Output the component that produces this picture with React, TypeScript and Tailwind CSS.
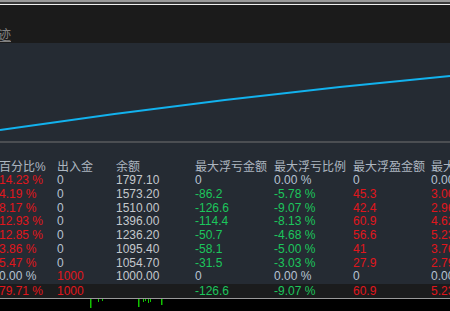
const RED = 'text-[#e0161c]';
const GREEN = 'text-[#1cc65c]';
const GRAY = 'text-[#b6c2d2]';
const LIGHT = 'text-[#c4c8cc]';

type Cell = [string, string];

const headers = ['百分比%', '出入金', '余额', '最大浮亏金额', '最大浮亏比例', '最大浮盈金额', '最大浮盈比例'];

const rows: Cell[][] = [
  [['14.23 %', RED], ['0', GRAY], ['1797.10', LIGHT], ['0', GRAY], ['0.00 %', GRAY], ['0', GRAY], ['0.00 %', GRAY]],
  [['4.19 %', RED], ['0', GRAY], ['1573.20', LIGHT], ['-86.2', GREEN], ['-5.78 %', GREEN], ['45.3', RED], ['3.00 %', RED]],
  [['8.17 %', RED], ['0', GRAY], ['1510.00', LIGHT], ['-126.6', GREEN], ['-9.07 %', GREEN], ['42.4', RED], ['2.96 %', RED]],
  [['12.93 %', RED], ['0', GRAY], ['1396.00', LIGHT], ['-114.4', GREEN], ['-8.13 %', GREEN], ['60.9', RED], ['4.62 %', RED]],
  [['12.85 %', RED], ['0', GRAY], ['1236.20', LIGHT], ['-50.7', GREEN], ['-4.68 %', GREEN], ['56.6', RED], ['5.23 %', RED]],
  [['3.86 %', RED], ['0', GRAY], ['1095.40', LIGHT], ['-58.1', GREEN], ['-5.00 %', GREEN], ['41', RED], ['3.76 %', RED]],
  [['5.47 %', RED], ['0', GRAY], ['1054.70', LIGHT], ['-31.5', GREEN], ['-3.03 %', GREEN], ['27.9', RED], ['2.79 %', RED]],
  [['0.00 %', GRAY], ['1000', RED], ['1000.00', LIGHT], ['0', GRAY], ['0.00 %', GRAY], ['0', GRAY], ['0.00 %', GRAY]],
];

const total: Cell[] = [['79.71 %', RED], ['1000', RED], ['', LIGHT], ['-126.6', GREEN], ['-9.07 %', GREEN], ['60.9', RED], ['5.23 %', RED]];

const cols = 'grid grid-cols-[58px_59px_79px_79px_79px_78px_100px]';

function Row({ cells, className = '' }: { cells: Cell[]; className?: string }) {
  return (
    <div className={`${cols} h-[13.75px] leading-[13.75px] ${className}`}>
      {cells.map(([v, c], i) => (
        <div key={i} className={`whitespace-nowrap ${c}`}>{v}</div>
      ))}
    </div>
  );
}

export default function App() {
  return (
    <div
      className="w-[450px] h-[311px] overflow-hidden bg-[#252b33] text-[12px]"
      style={{ fontFamily: '"Liberation Sans", "Noto Sans CJK SC", sans-serif' }}
    >
      {/* window chrome */}
      <div className="h-[2px] bg-[#9a9a9a]" />
      <div className="h-[2px] bg-[#3a3a3a]" />
      <div className="h-[1px] bg-[#f0f0f0]" />
      <div className="h-[38px] bg-[#1b1b1b] flex items-end">
        <span className="-ml-[2px] mb-[1px] text-[13px] leading-[15px] text-[#808080] underline underline-offset-2">迹</span>
      </div>

      {/* equity curve */}
      <div className="h-[98px]">
        <svg width="450" height="98" viewBox="0 0 450 98" className="block">
          <path d="M0 87 Q225 54 450 33" fill="none" stroke="#12b2ee" strokeWidth="2" />
        </svg>
      </div>
      <div className="h-[2px] bg-[#4b4e52]" />

      {/* table */}
      <div className="pt-[17px] -ml-[1px]">
        <div className={`${cols} h-[14px] leading-[14px] text-[#adb6c0]`}>
          {headers.map((h) => (
            <div key={h} className="whitespace-nowrap">{h}</div>
          ))}
        </div>
        {rows.map((r, i) => (
          <Row key={i} cells={r} />
        ))}
        <Row cells={total} className="bg-[#1b1c1d] h-[14px] leading-[14px]" />
      </div>
      <div className="h-[1px] bg-[#9a9a9a]" />

      {/* bottom histogram strip */}
      <div className="h-[13px] bg-black">
        <svg width="450" height="13" viewBox="0 0 450 13" className="block">
          <g fill="#12c400">
            <rect x="90" y="0" width="1.5" height="9" />
            <rect x="98" y="0" width="1" height="3" />
            <rect x="102" y="0" width="1" height="2" />
            <rect x="138" y="0" width="1.5" height="8" />
            <rect x="143" y="0" width="1" height="3" />
            <rect x="145" y="0" width="1" height="2" />
            <rect x="148" y="0" width="1" height="4" />
            <rect x="150" y="0" width="1" height="3" />
            <rect x="161" y="0" width="1.5" height="6" />
          </g>
        </svg>
      </div>
    </div>
  );
}
